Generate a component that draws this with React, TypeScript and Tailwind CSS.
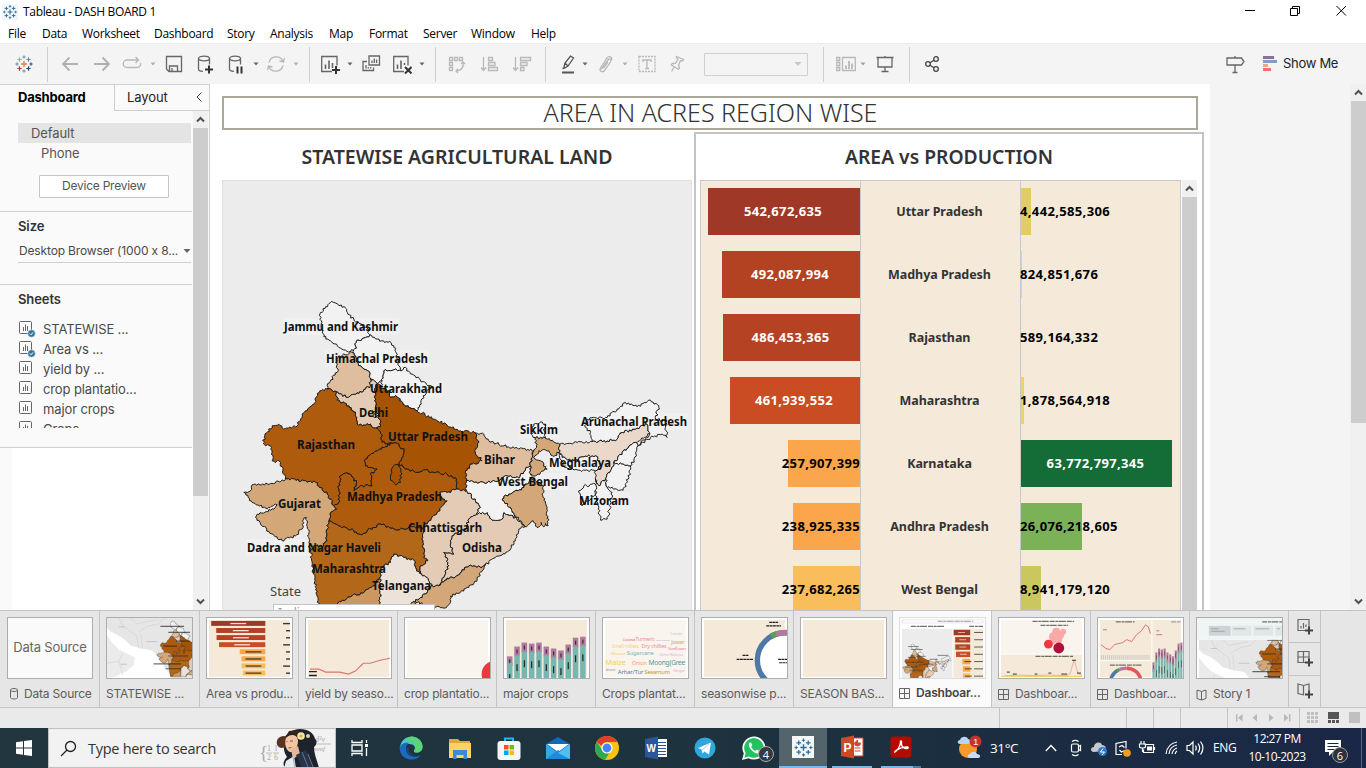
import React from "react";

type Pt = [number, number];

/* ---------- Map geometry ---------- */

function hash(n: number) {
  const s = Math.sin(n * 12.9898) * 43758.5453;
  return s - Math.floor(s);
}

// Adds a ragged border between two vertices; the same edge gives the same line in both directions.
function edge(a: Pt, b: Pt): Pt[] {
  const swap = a[0] > b[0] || (a[0] === b[0] && a[1] > b[1]);
  const p = swap ? b : a;
  const q = swap ? a : b;
  const len = Math.hypot(q[0] - p[0], q[1] - p[1]);
  const n = Math.max(1, Math.floor(len / 4.5));
  const seed = p[0] * 3.1 + p[1] * 7.7 + q[0] * 1.3 + q[1] * 2.9;
  const out: Pt[] = [];
  for (let i = 1; i < n; i++) {
    const t = i / n;
    const d = (hash(seed + i * 17.3) - 0.5) * 8;
    const nx = -(q[1] - p[1]) / len;
    const ny = (q[0] - p[0]) / len;
    out.push([p[0] + (q[0] - p[0]) * t + nx * d, p[1] + (q[1] - p[1]) * t + ny * d]);
  }
  return swap ? out.reverse() : out;
}

function rough(src: string, dx = 0, dy = 0) {
  const pts = src.split(" ").map((s) => {
    const [x, y] = s.split(",").map(Number);
    return [x + dx, y + dy] as Pt;
  });
  let d = `M${pts[0].join(" ")}`;
  pts.forEach((p, i) => {
    const q = pts[(i + 1) % pts.length];
    [...edge(p, q), q].forEach((m) => (d += `L${m[0].toFixed(1)} ${m[1].toFixed(1)}`));
  });
  return d + "Z";
}

const NONE = "#f2f2f2";
const west: [string, string][] = [
  [NONE, "310,35 322,40 345,52 352,70 370,85 385,97 412,115 418,132 405,140 378,150 375,165 378,172 360,182 345,178 325,170 318,160 295,148 280,138 272,110 268,70 285,48 303,32"],
  [NONE, "418,132 405,140 378,150 375,165 378,172 365,185 375,195 380,215 400,235 412,240 420,262 440,278 458,262 460,240 490,237 512,240 505,225 500,200 490,165 478,152 462,155 440,145"],
  ["#dfbe9f", "360,182 365,185 375,195 380,215 400,235 412,240 420,262 420,285 405,295 350,320 318,303 290,295 292,278 320,245 318,205 325,195 345,192"],
  ["#e3cbb5", "318,303 350,320 405,295 420,285 420,262 440,278 435,290 432,320 435,350 445,375 450,408 435,412 420,400 395,405 380,400 375,370 355,345 320,328"],
  ["#e3cbb5", "425,360 440,358 445,375 432,380"],
  [NONE, "458,262 460,240 490,237 512,240 520,230 545,250 570,268 605,290 578,315 572,340 560,360 535,350 508,330 500,318 480,320 475,300 450,290"],
  ["#a65304", "435,290 440,278 450,290 475,300 480,320 500,318 508,330 535,350 560,360 610,385 650,403 690,420 732,425 745,455 732,480 755,510 725,520 705,540 708,570 708,598 690,600 678,595 678,565 650,550 610,545 585,537 555,545 530,535 505,520 520,480 505,460 485,458 455,455 455,435 440,412 450,408 445,375 435,350 432,320"],
  ["#ae5b0d", "290,295 318,303 320,328 355,345 375,370 380,400 395,405 420,400 435,412 440,412 455,435 455,455 485,458 440,480 405,505 405,525 440,535 420,550 425,585 390,585 370,600 378,575 350,545 330,555 325,600 325,635 310,645 290,610 255,575 220,570 165,562 150,515 125,510 123,470 98,458 103,435 125,405 145,400 155,412 200,405 215,370 250,340 268,300"],
  ["#af5b0d", "310,645 325,635 325,600 330,555 350,545 378,575 370,600 390,585 425,585 420,550 440,535 405,525 405,505 440,480 485,458 505,460 520,480 505,520 530,535 555,545 585,537 610,545 650,550 678,565 678,595 650,605 628,605 635,625 650,630 620,665 595,690 580,710 545,708 500,718 450,700 410,720 395,732 350,712 325,705 295,690 300,665 318,655"],
  ["#a65304", "490,525 505,520 512,545 510,575 495,582 480,562 484,545"],
  ["#d3a778", "165,562 220,570 255,575 290,610 310,645 318,655 300,665 295,690 290,715 290,750 275,768 250,765 240,780 235,740 228,680 220,682 218,710 195,735 155,750 115,722 75,680 80,670 130,655 140,642 105,652 65,635 40,605 60,600 65,582 120,578 160,570"],
  ["#b36719", "240,780 250,765 275,768 290,750 290,715 295,690 325,705 350,712 395,732 410,720 450,700 500,718 545,708 580,710 578,750 580,800 592,810 570,825 568,848 555,830 550,808 520,800 490,790 480,815 450,830 450,858 430,885 400,905 365,915 320,940 310,975 268,975 262,920 250,850"],
  ["#cd9762", "320,940 365,915 400,905 430,885 450,858 448,975 310,975"],
  ["#ece2da", "450,858 450,830 480,815 490,790 520,800 550,808 555,830 568,848 590,860 605,885 575,920 540,940 530,975 448,975"],
  ["#e3cbb5", "628,605 650,605 678,595 690,600 708,598 735,630 750,650 738,670 715,685 705,715 665,735 660,760 670,790 640,785 655,825 640,860 625,885 605,885 590,860 568,848 570,825 592,810 580,800 578,750 580,710 595,690 620,665 650,630 635,625"],
  ["#e3cbb5", "738,670 770,665 785,688 815,685 820,665 855,680 885,705 865,715 855,750 835,780 795,800 765,822 740,830 715,825 690,845 670,862 650,862 625,885 640,860 655,825 640,785 670,790 660,760 665,735 705,715 715,685"],
  ["#d3a778", "765,822 740,865 715,890 660,916 660,935 640,952 612,950 560,935 530,975 540,940 575,920 605,885 625,885 650,862 670,862 690,845 715,825 740,830"],
  [NONE, "708,570 760,575 800,572 830,555 865,562 885,535 900,525 902,562 880,590 835,610 815,625 840,645 855,680 820,665 815,685 785,688 770,665 738,670 750,650 735,630 708,598"],
  ["#dfbe9f", "732,425 760,430 775,450 820,465 865,475 910,478 920,470 905,490 900,525 885,535 865,562 830,555 800,572 760,575 708,570 705,540 725,520 755,510 732,480 745,455"],
];
const east: [string, string][] = [
  ["#d3a778", "255,140 285,142 300,150 328,160 325,185 310,197 295,180 265,180 250,200 270,210 290,235 270,245 255,255 240,250 240,225 245,190 258,170"],
  ["#d3a778", "242,262 280,285 278,320 290,350 293,405 285,398 280,408 272,395 266,408 255,405 248,390 228,408 195,375 180,350 155,325 175,310 220,290"],
  [NONE, "255,140 248,140 245,120 250,100 270,93 285,100 280,120 285,142"],
  ["#ead9ca", "328,160 380,155 425,152 470,150 500,145 515,125 560,112 590,100 598,130 555,155 515,185 490,215 480,240 465,265 445,285 435,265 435,240 450,225 435,195 400,198 370,210 335,200 325,185"],
  [NONE, "325,185 335,200 370,210 400,198 435,195 450,225 435,240 385,238 340,228"],
  [NONE, "425,152 420,125 405,110 410,85 470,80 500,55 525,35 560,48 600,28 625,45 615,85 650,90 645,110 650,140 635,130 600,140 562,165 598,130 590,100 560,112 515,125 500,145 470,150"],
  [NONE, "490,215 515,185 555,155 562,165 558,195 540,225 500,218"],
  [NONE, "490,215 500,218 540,225 535,260 518,298 470,290 465,265 480,240"],
  [NONE, "435,265 445,285 465,265 470,290 485,305 480,340 470,385 450,388 445,350 435,310"],
  [NONE, "435,280 400,285 385,300 395,345 410,330 435,310"],
];
const STATES = [
  ...west.map(([fill, p]) => ({ fill, d: rough(p) })),
  ...east.map(([fill, p]) => ({ fill, d: rough(p, 660, 300) })),
];

function India({ stroke = 3 }: { stroke?: number }) {
  return (
    <g stroke="#1c1c1c" strokeWidth={stroke} strokeLinejoin="round">
      {STATES.map((s, i) => (
        <path key={i} d={s.d} fill={s.fill} />
      ))}
    </g>
  );
}

const LABELS: [string, number, number, number][] = [
  ["Jammu and Kashmir", 284, 331, 114],
  ["Himachal Pradesh", 326, 363, 102],
  ["Uttarakhand", 370, 393, 72],
  ["Delhi", 359, 417, 29],
  ["Rajasthan", 297, 449, 58],
  ["Uttar Pradesh", 388, 441, 80],
  ["Gujarat", 278, 508, 43],
  ["Madhya Pradesh", 347, 501, 95],
  ["Bihar", 484, 464, 31],
  ["Sikkim", 520, 434, 38],
  ["Arunachal Pradesh", 581, 426, 106],
  ["Meghalaya", 549, 467, 62],
  ["West Bengal", 497, 486, 71],
  ["Mizoram", 579, 505, 50],
  ["Chhattisgarh", 408, 532, 74],
  ["Odisha", 462, 552, 40],
  ["Dadra and Nagar Haveli", 247, 552, 134],
  ["Maharashtra", 312, 573, 74],
  ["Telangana", 372, 590, 59],
];

/* ---------- Small pieces ---------- */

function Icon({ className = "", color = "#666", w = 20, children }: { className?: string; color?: string; w?: number; children: React.ReactNode }) {
  return (
    <svg width={w} height="20" viewBox={`0 0 ${w} 20`} fill="none" stroke={color} strokeWidth="1.3" className={`block shrink-0 ${className}`}>
      {children}
    </svg>
  );
}

function Caret({ className = "", color = "#666", big = false }: { className?: string; color?: string; big?: boolean }) {
  return (
    <svg width="8" height="8" viewBox="0 0 8 8" className={`block shrink-0 ${className}`}>
      <path d={big ? "M.5 2h7L4 6z" : "M1.500 2.500h5L4 5.500z"} fill={color} />
    </svg>
  );
}

function Divider({ className = "" }: { className?: string }) {
  return <div className={`h-[35px] w-px shrink-0 bg-[#cfcfcf] ${className}`} />;
}

function Arrow({ down = false }: { down?: boolean }) {
  return (
    <div className="flex h-[17px] w-full shrink-0 items-center justify-center bg-[#f0f0f0]">
      <svg width="9" height="7" viewBox="0 0 9 7" fill="none" stroke="#505050" strokeWidth="2">
        <path d={down ? "M1 1.500l3.500 3.500L8 1.500" : "M1 5.500L4.500 2L8 5.500"} />
      </svg>
    </div>
  );
}

const plus = (x: number, y: number, c: string, s = 2, w = 1) => <path d={`M${x - s} ${y}h${s * 2}M${x} ${y - s}v${s * 2}`} stroke={c} strokeWidth={w} />;

function TableauMark({ mono = false }: { mono?: boolean }) {
  const c = mono ? ["#2a6ea0", "#2a6ea0", "#2a6ea0", "#2a6ea0", "#2a6ea0", "#2a6ea0"] : ["#eb7c34", "#ed9b3e", "#5c8ea5", "#c0313f", "#1f4778", "#7a86a8"];
  return (
    <>
      {plus(10, 10, c[0], 3, 1.4)}
      {plus(5.5, 5.5, c[1], 2.2, 1.2)}
      {plus(14.5, 5.5, c[2], 2.2, 1.2)}
      {plus(5.5, 14.5, c[3], 2.2, 1.2)}
      {plus(14.5, 14.5, c[4], 2.2, 1.2)}
      {plus(10, 3, c[5], 1.6)}
      {plus(10, 17, c[5], 1.6)}
      {plus(3, 10, c[2], 1.6)}
      {plus(17, 10, c[4], 1.6)}
    </>
  );
}

function SheetGlyph({ className = "", checked = false }: { className?: string; checked?: boolean }) {
  return (
    <svg width="17" height="17" viewBox="0 0 17 17" fill="none" stroke="#666" className={`block shrink-0 ${className}`}>
      <rect x=".5" y=".5" width="12" height="12" rx="1" />
      <path d="M4.500 6v4M6.500 3.500v6.500M8.500 5v5" />
      {checked && (
        <>
          <circle cx="12.500" cy="12.500" r="3.800" fill="#36789f" stroke="#fafafa" strokeWidth=".5" />
          <path d="M10.800 12.600l1.200 1.200 2-2.400" stroke="#fff" />
        </>
      )}
    </svg>
  );
}

/* ---------- Window chrome ---------- */

function TitleBar() {
  return (
    <header className="flex h-[23px] shrink-0 items-center bg-white">
      <svg width="16" height="16" viewBox="0 0 20 20" className="ml-[2px] mr-[5px] bg-[#f2f6f8]">
        <TableauMark mono />
      </svg>
      <span className="text-[12px] tracking-[-0.32px] text-black">Tableau - DASH BOARD 1</span>
      <svg width="130" height="20" viewBox="0 0 130 20" fill="none" stroke="#000" className="ml-auto">
        <path d="M9 8.500h10" />
        <path d="M54.500 6.500h7v7h-7zM56.500 6.500v-2h7v7h-2" />
        <path d="M100.500 4l9.500 9.500M110 4l-9.500 9.500" />
      </svg>
    </header>
  );
}

function MenuBar() {
  const item = "shrink-0";
  return (
    <nav className="flex h-[20px] shrink-0 items-center bg-white pl-2 pt-[2px] text-[12px] tracking-[-0.28px] text-black">
      <span className={`${item} w-[34px]`}>File</span>
      <span className={`${item} w-[40px]`}>Data</span>
      <span className={`${item} w-[72px]`}>Worksheet</span>
      <span className={`${item} w-[73px]`}>Dashboard</span>
      <span className={`${item} w-[43px]`}>Story</span>
      <span className={`${item} w-[59px]`}>Analysis</span>
      <span className={`${item} w-[40px]`}>Map</span>
      <span className={`${item} w-[54px]`}>Format</span>
      <span className={`${item} w-[48px]`}>Server</span>
      <span className={`${item} w-[60px]`}>Window</span>
      <span className={item}>Help</span>
    </nav>
  );
}

const OFF = "#b8b8b8";

function Toolbar() {
  return (
    <div className="flex h-[41px] shrink-0 items-center border-t border-[#ececec] bg-[#f4f4f4]">
      <Icon className="ml-[14px]"><TableauMark /></Icon>
      <Divider className="ml-[13px]" />
      <Icon className="ml-3" color="#b0b0b0"><path strokeWidth="1.8" d="M18 10H3M9.500 3.500L3 10l6.500 6.500" /></Icon>
      <Icon className="ml-3" color="#b0b0b0"><path strokeWidth="1.8" d="M2 10h15M10.500 3.500L17 10l-6.500 6.500" /></Icon>
      <Icon className="ml-[10px]" color={OFF}><path d="M10 6H5a3.500 3.500 0 000 7.500h10a3.500 3.500 0 003.500-4.500M8 6h8M13.500 3l3 3-3 3" /></Icon>
      <Caret className="ml-[7px]" color="#b0b0b0" />
      <Icon className="ml-[7px]"><path d="M2.500 2.500h15v15H5l-2.500-2.500zM5.500 17v-5h8v5M8 17v-3" /></Icon>
      <Icon className="ml-3">
        <ellipse cx="8" cy="4.500" rx="5.500" ry="2.300" /><path d="M2.500 4.500V15c0 1.400 2 2.300 4.500 2.300M13.500 4.500v6" />
        <path stroke="#333" strokeWidth="2" d="M9 15.500h8M13 11.500v8" />
      </Icon>
      <Icon className="ml-[11px]">
        <ellipse cx="8" cy="4.500" rx="5.500" ry="2.300" /><path d="M2.500 4.500V15c0 1.400 2 2.300 4.500 2.300M13.500 4.500v6" />
        <path stroke="#333" strokeWidth="2" d="M10.500 12.500v7M14.500 12.500v7" />
      </Icon>
      <Caret className="ml-[5px]" />
      <Icon className="ml-[6px]" color={OFF}><path d="M3 8.500a7.500 7.500 0 0114-1.500M17 11.500A7.500 7.500 0 013 13M18.500 4l-1 4-4-1M1.500 16l1-4 4 1" /></Icon>
      <Caret className="ml-[6px]" color="#b0b0b0" />
      <Divider className="ml-[9px]" />
      <Icon className="ml-[10px]">
        <path d="M12 17.500H1.700V2.500H17v9" /><path strokeWidth="1.600" d="M5.500 10.500V15M9 6.500V15M12.500 9v5" /><path stroke="#333" strokeWidth="2" d="M12 16h8M16 12v8" />
      </Icon>
      <Caret className="ml-[6px]" />
      <Icon className="ml-[7px]">
        <path d="M8 2h10.500v9H8zM6 7.500H2v9h10.500v-3M11 6.500V9M13.300 4.500V9M15.600 5.500V9M5 11v3.500M7.300 13v1.500M9.600 13v1.500" />
      </Icon>
      <Icon className="ml-[11px]">
        <path d="M12 17.500H1.700V2.500H16v9" /><path strokeWidth="1.600" d="M5.500 10.500V15M9 6.500V15M12.500 9v2" /><path stroke="#333" strokeWidth="2" d="M13 13l6.500 6.500M19.500 13L13 19.500" />
      </Icon>
      <Caret className="ml-[6px]" />
      <Divider className="ml-[9px]" />
      <Icon className="ml-[11px]" color={OFF}><path d="M2.500 3.500h3v3h-3zM7.500 3.500h3v3h-3zM12.500 3.500h3v3h-3zM2.500 8.500h3v3h-3zM2.500 13.500h3v3h-3zM16 8.500c1 4-1 8-7 8.500M14 10l2-2 2 2M11 15l-2 2 2 2" /></Icon>
      <Icon className="ml-3" color={OFF}><path d="M4.500 3v13M2 13.500l2.500 3 2.500-3M9.500 3.500h4v3h-4zM9.500 8.500h6.500v3H9.500zM9.500 13.500h9v3h-9z" /></Icon>
      <Icon className="ml-[13px]" color={OFF}><path d="M3.500 3v13M1 13.500l2.500 3 2.500-3M8.500 3.500h10v3h-10zM8.500 8.500H15v3H8.500zM8.500 13.500H12v3H8.500z" /></Icon>
      <Divider className="ml-[13px]" />
      <Icon className="ml-3" color="#555"><path d="M6 13l1-4 5.500-7 3 2L10 12l-3.500 2zM7 9l3 3M4.500 14.500l2-.5" /><path strokeWidth="2" d="M4 18.500h12" /></Icon>
      <Caret className="ml-[3px]" />
      <Icon className="ml-[6px]" color={OFF}><path d="M6.500 15L13 6c1.500-2 4-.5 2.500 2l-6 8.500c-2 2.500-5.500.5-4-2.500L12 4c2-2.500 5.500-1 4.500 2M8.500 14l4.500-6" /></Icon>
      <Caret className="ml-[6px]" color="#b0b0b0" />
      <Icon className="ml-2" color={OFF}><path strokeDasharray="2 1" d="M2 2.500h16v15H2z" /><path d="M6 8V6h8v2M10 6v8.500M8 14.500h4" /></Icon>
      <Icon className="ml-[10px]" color={OFF}><path d="M9.500 2.500l7 3-1 1.500-2-.3-2 4.300 1 3-1.200 1.200-7-4.200 1-1.500 3-.2 2.700-4-1.500-1.500zM7.500 12.500l-3 5" /></Icon>
      <div className="ml-[17px] flex h-[23px] w-[104px] shrink-0 items-center justify-end rounded-[1px] border border-[#d0d0d0] pr-[5px]">
        <Caret color="#c8c8c8" big />
      </div>
      <Divider className="ml-[15px]" />
      <Icon className="ml-3" color={OFF}><path d="M.7 3.500h3v3h-3zM.7 8.500h3v3h-3zM.7 13.500h3v3h-3zM6.500 3.500h12.800v13H6.500z" /><path strokeWidth="1.800" d="M10 11.500V15M13 7v8M16 9.500V15" /></Icon>
      <Caret className="ml-[3px]" color="#a0a0a0" />
      <Icon className="ml-2"><path d="M1.500 3.500h17M3 3.500V13h14V3.500M10 13v4.500M6.500 17.500h7M10 2v2" /></Icon>
      <Divider className="ml-[14px]" />
      <Icon className="ml-3" color="#444"><circle cx="6" cy="10" r="2.300" /><circle cx="14" cy="5" r="2.300" /><circle cx="14" cy="15" r="2.300" /><path d="M8 8.800l4-2.500M8 11.200l4 2.500" /></Icon>
      <Icon className="ml-[283px]"><path d="M2 4h14.500L19 7.500 16.500 11H2zM10 2v2M10 11v7.500M7.500 18.500h5" /></Icon>
      <svg width="16" height="16" viewBox="0 0 16 16" className="ml-[17px]">
        <path d="M1 0h11v3H1z" fill="#8a7098" /><path d="M1 4h14v3H1z" fill="#7c9fc9" /><path d="M1 8h5v3H1z" fill="#f4a582" /><path d="M1 12h8v3H1z" fill="#fb6c7c" />
      </svg>
      <span className="ml-[5px] font-['Inter','Liberation_Sans',sans-serif] text-[13px] tracking-[-0.3px] text-[#222]">Show Me</span>
    </div>
  );
}

/* ---------- Left pane ---------- */

const SHEETS: [string, boolean][] = [
  ["STATEWISE ...", true],
  ["Area vs ...", true],
  ["yield by ...", false],
  ["crop plantatio...", false],
  ["major crops", false],
  ["Crops", false],
];

function SidePane() {
  return (
    <aside className="flex w-[210px] shrink-0 flex-col border-r border-t border-[#cfcfcf] bg-[#fafafa] font-['Inter','Liberation_Sans',sans-serif] text-[13px] text-[#4a4a4a]">
      <div className="flex h-[26px] shrink-0">
        <div className="w-[114px] pl-[18px] pt-[3px] font-bold tracking-[-0.2px] text-black">Dashboard</div>
        <div className="flex flex-1 items-start border-b border-l border-[#cfcfcf] pl-3 pt-[3px] tracking-[-0.1px] text-[#222]">
          Layout
          <svg width="8" height="12" viewBox="0 0 8 12" fill="none" stroke="#444" className="ml-auto mr-[6px] mt-[3px]"><path d="M6.500 1.500L2 6l4.500 4.500" /></svg>
        </div>
      </div>
      <div className="flex min-h-0 flex-1">
        <div className="flex w-[193px] flex-col">
          <div className="flex h-[101px] w-[192px] shrink-0 flex-col border-b border-[#cfcfcf] pr-px pt-3 tracking-[-0.1px] text-[#555]">
            <div className="ml-[18px] h-5 bg-[#e4e4e4] pl-[13px] leading-5">Default</div>
            <div className="ml-[18px] h-5 pl-[23px] leading-5">Phone</div>
            <div className="ml-[39px] mt-[12px] h-[23px] w-[130px] rounded-[1px] border border-[#c4c4c4] bg-white text-center text-[12px] leading-[20px] tracking-[-0.25px]">Device Preview</div>
          </div>
          <div className="h-[73px] w-[192px] shrink-0 border-b border-[#cfcfcf] pl-[18px] pr-px pt-[4px]">
            <div className="font-semibold leading-5 tracking-[-0.1px] text-[#333]">Size</div>
            <div className="mt-[3px] flex h-[24px] items-center justify-between border-b border-[#cfcfcf] pl-px pt-px">
              <span className="whitespace-nowrap text-[12px] tracking-[-0.15px]">Desktop Browser (1000 x 8...</span>
              <Caret big />
            </div>
          </div>
          <div className="h-[163px] w-[192px] shrink-0 border-b border-[#cfcfcf] pl-[18px] pt-[4px]">
            <div className="font-semibold leading-5 tracking-[-0.1px] text-[#333]">Sheets</div>
            <div className="mt-[10px] h-[109px] overflow-hidden">
              {SHEETS.map(([name, on]) => (
                <div key={name} className="flex h-5 items-center pl-[1px]">
                  <SheetGlyph checked={on} />
                  <span className="ml-[7px] leading-5 tracking-[-0.12px]">{name}</span>
                </div>
              ))}
            </div>
          </div>
          <div className="ml-3 flex-1 bg-white" />
        </div>
        <div className="flex w-[15px] flex-col bg-[#f0f0f0]">
          <Arrow />
          <div className="h-[368px] bg-[#cdcdcd]" />
          <div className="mt-auto"><Arrow down /></div>
        </div>
      </div>
    </aside>
  );
}

/* ---------- Dashboard ---------- */

type Row = { state: string; area: string; areaW: number; areaC: string; prod: string; prodW: number; prodC: string };
const ROWS: Row[] = [
  { state: "Uttar Pradesh", area: "542,672,635", areaW: 152, areaC: "#9f3826", prod: "4,442,585,306", prodW: 10, prodC: "#e1cd64" },
  { state: "Madhya Pradesh", area: "492,087,994", areaW: 138, areaC: "#b34223", prod: "824,851,676", prodW: 1, prodC: "#f6cf71" },
  { state: "Rajasthan", area: "486,453,365", areaW: 137, areaC: "#b44223", prod: "589,164,332", prodW: 0, prodC: "#f6cf71" },
  { state: "Maharashtra", area: "461,939,552", areaW: 130, areaC: "#ca4c22", prod: "1,878,564,918", prodW: 3, prodC: "#f0d264" },
  { state: "Karnataka", area: "257,907,399", areaW: 72, areaC: "#fba64a", prod: "63,772,797,345", prodW: 151, prodC: "#146c36" },
  { state: "Andhra Pradesh", area: "238,925,335", areaW: 67, areaC: "#fba64a", prod: "26,076,218,605", prodW: 61, prodC: "#7bb257" },
  { state: "West Bengal", area: "237,682,265", areaW: 67, areaC: "#fabd5c", prod: "8,941,179,120", prodW: 20, prodC: "#cac75e" },
];

function BarTable() {
  const bar = "flex h-[47px] items-center whitespace-nowrap text-[13px] tracking-[0.35px]";
  return (
    <div className="flex w-[481px] flex-col overflow-hidden border border-b-0 border-[#c9c9c9] bg-[#f5ead9] text-[12.5px] font-bold">
      {ROWS.map((r) => (
        <div key={r.state} className="flex h-[63px] shrink-0">
          <div className="flex w-[160px] justify-end border-r border-[#c9c9c9] pt-[7px]">
            <div className={`${bar} ${r.areaW > 100 ? "justify-center pr-[2px] text-white" : "justify-end text-black"}`} style={{ width: r.areaW, background: r.areaC }}>
              <span className="shrink-0">{r.area}</span>
            </div>
          </div>
          <div className="flex w-[160px] items-center justify-center border-r border-[#c9c9c9] pr-[2px] tracking-[-0.05px] text-[#333]">{r.state}</div>
          <div className="flex flex-1 pt-[7px]">
            <div className={`${bar} ${r.prodW > 100 ? "justify-center pr-[2px] text-white" : "justify-start text-black"}`} style={{ width: r.prodW, background: r.prodC }}>
              <span className={r.prodW > 100 ? "shrink-0" : "-ml-px shrink-0"}>{r.prod}</span>
            </div>
          </div>
        </div>
      ))}
    </div>
  );
}

function Canvas() {
  return (
    <main className="flex w-[1000px] shrink-0 flex-col bg-white pl-3 pt-3 font-['Noto_Sans','Open_Sans',sans-serif]">
      <h1 className="flex h-[34px] w-[976px] shrink-0 items-center justify-center border-2 border-[#aca899] pl-px text-[25px] font-light text-[#333]">AREA IN ACRES REGION WISE</h1>
      <div className="flex min-h-0 flex-1">
        <section className="flex w-[470px] flex-col">
          <h2 className="flex h-[50px] shrink-0 items-center justify-center pt-[3px] text-[19.5px] font-semibold text-[#333]">STATEWISE AGRICULTURAL LAND</h2>
          <div className="relative flex-1 overflow-hidden border border-b-0 border-[#e0e0e0] bg-[#ececec]">
            <svg width="469" height="429" viewBox="223 181 469 429" className="block">
              {LABELS.map(([t, x, y, w]) => (
                <rect key={t} x={x - 1} y={y - 13} width={w + 2} height="17" fill="#f0f0f0" />
              ))}
              <g transform="translate(230.500 290.800) scale(.33333)"><India /></g>
              <g fontSize="12" fontWeight="700" fill="#111" transform="translate(0 .4)">
                {LABELS.map(([t, x, y, w]) => (
                  <text key={t} x={x} y={y} textLength={w} lengthAdjust="spacingAndGlyphs">{t}</text>
                ))}
              </g>
            </svg>
            <div className="absolute left-[47px] top-[402px] text-[13px] leading-4 text-[#444]">State</div>
            <div className="absolute left-[50px] top-[423px] h-5 w-[162px] border border-[#c4c4c4] bg-white pl-1 text-[12px] leading-4 text-[#999]">India</div>
          </div>
        </section>
        <section className="ml-[2px] mt-[2px] flex w-[510px] flex-col border-2 border-b-0 border-[#c4c4c4]">
          <h2 className="flex h-[46px] shrink-0 items-center justify-center text-[19.3px] font-semibold text-[#333]">AREA vs PRODUCTION</h2>
          <div className="flex min-h-0 flex-1 pl-[4px]">
            <BarTable />
            <div className="ml-px flex w-[15px] flex-col bg-[#f0f0f0]">
              <Arrow />
              <div className="flex-1 bg-[#cdcdcd]" />
            </div>
          </div>
        </section>
      </div>
    </main>
  );
}

/* ---------- Sheet tabs ---------- */

const CREAM = "#f5ead9";

function MapThumb({ x = 48, y = 1, s = 0.06, ox = 0, oy = 0 }: { x?: number; y?: number; s?: number; ox?: number; oy?: number }) {
  return (
    <g>
      <g transform={`translate(${ox} ${oy})`}>
        <path d="M0 0H86V62H0z" fill="#fff" />
        <path d="M0 0H86V62H66L56 46 50 38 46 33 34 31 24 28 18 22 12 18 4 14 0 10z" fill="#e6e6e6" />
        <path d="M0 18L6 26 12 32 20 36 28 40 27 48 20 54 10 59 0 62z" fill="#ebebeb" />
        <path d="M12 0l4 8 14 10 2 12M32 14l10-6 10-2 6-6M34 16l2 14M0 46l12-2 4-8M12 44l4 14M24 0l6 6 20-4" fill="none" stroke="#cfcfcf" strokeWidth=".6" />
        <path d="M12 9h6M40 24h11M14 47h6" stroke="#bdbdbd" strokeWidth=".8" />
      </g>
      <g transform={`translate(${x} ${y}) scale(${s})`}><India stroke={4.5} /></g>
      <g fill="#222" transform={`translate(${x} ${y})`}>
        <path d="M6 7h24v1.200H6zM14 13h22v1.200H14zM9 27h14v1.200H9zM-1 45h28v1.200H-1zM14 37h20v1.200H14zM11 50h16v1.200H11zM22 22h14v1.200H22z" opacity=".65" />
      </g>
    </g>
  );
}

function AreaThumb() {
  return (
    <g>
      <path d="M2 2H84V60H2z" fill={CREAM} />
      {ROWS.concat({ ...ROWS[6], area: "222,404,359", areaW: 63 }).map((r, i) => (
        <g key={i}>
          <rect x={59 - r.areaW * 0.36} y={3 + i * 7.2} width={r.areaW * 0.36} height="5" fill={r.areaC} />
          <rect x={i < 4 ? 59 - r.areaW * 0.18 - 8 : 39} y={5 + i * 7.2} width="16" height="1.300" fill={i < 4 ? "#fff" : "#222"} opacity=".85" />
          <rect x={i % 3 ? 80 : 77} y={5 + i * 7.2} width={i % 3 ? 4 : 7} height="1.400" fill="#333" />
        </g>
      ))}
    </g>
  );
}

function CropBars({ x = 0, y = 0, k = 1 }: { x?: number; y?: number; k?: number }) {
  const tops = [39, 29, 25, 26, 25, 29, 31, 33, 27, 20, 19];
  return (
    <g transform={`translate(${x} ${y}) scale(${k} 1)`}>
      {tops.map((t, i) => (
        <g key={i}>
          <rect x={3 + i * 7.4} y={t} width="5.600" height="10" fill="#b07aa1" />
          <rect x={3 + i * 7.4} y={t + (i ? 9 : 6)} width="5.600" height="50" fill="#76b7b2" />
          <rect x={5.2 + i * 7.4} y={t + 18} width="1.200" height="7" fill="#222" />
          <rect x={5.2 + i * 7.4} y={t + 3} width="1.200" height="4" fill="#333" />
        </g>
      ))}
    </g>
  );
}

const WORDS: [string, number, number, number, string][] = [
  ["Coconut", 20, 23, 3.5, "#e15759"], ["Turmeric", 33, 23, 5, "#f08a8c"], ["Black pepper", 54, 23, 2.5, "#c9a7c4"], ["Coriander", 68, 17, 3, "#c9c9c9"],
  ["Small millets", 9, 30, 5, "#f3d279"], ["Dry chillies", 39, 30, 5.4, "#f08a9c"], ["Jowar", 69, 26, 5.4, "#bfae5a"],
  ["Sunflower", 66, 33, 4.2, "#f07a7c"], ["Masoor", 8, 38, 4.4, "#f1ce63"], ["Sugarcane", 24, 38, 5.8, "#76b7b2"], ["Other Rabi pu", 57, 39, 4, "#d7b5cf"],
  ["Maize", 2, 48, 8, "#f1d06a"], ["Onion", 29, 48, 5.6, "#f7a35c"], ["Moong(Gree", 46, 48, 6.6, "#499894"],
  ["Arhar/Tur", 15, 57, 6, "#4e79a7"], ["Sesamum", 42, 57, 5.8, "#b6992d"], ["Ginger", 71, 55, 4, "#e9a9c4"], ["Arecanut", 3, 54, 2.6, "#999"],
];

function TinyTitle({ x, y, w, c = "#444" }: { x: number; y: number; w: number; c?: string }) {
  return <path d={`M${x} ${y}h${w}`} stroke={c} strokeWidth="1.300" strokeDasharray="5 .8 3 .5 7 1" opacity=".75" />;
}

function Thumb({ kind }: { kind: string }) {
  switch (kind) {
    case "map":
      return <MapThumb />;
    case "area":
      return <AreaThumb />;
    case "yield":
      return (
        <g>
          <path d="M2 2H84V60H2z" fill={CREAM} />
          <path d="M4 52h9l7 3h14l9 2 7-3 8-8h7l10-3 10-2" fill="none" stroke="#e0736f" strokeWidth="1.100" />
          <path d="M3 54.500h8M3 58.500h8" stroke="#222" strokeWidth="1.400" />
        </g>
      );
    case "plant":
      return <g><path d="M2 2H84V60H2z" fill="#faf4ef" /><circle cx="91" cy="57" r="13.500" fill="#ea3a40" /></g>;
    case "major":
      return <g><path d="M2 2H84V60H2z" fill={CREAM} /><CropBars /></g>;
    case "words":
      return (
        <g fontFamily="Noto Sans, sans-serif">
          <path d="M2 2H84V60H2z" fill="#faf4ef" />
          {WORDS.map(([t, x, y, s, c]) => <text key={t} x={x} y={y} fontSize={s} fill={c}>{t}</text>)}
        </g>
      );
    case "season":
      return (
        <g>
          <path d="M2 2H84V60H2z" fill={CREAM} />
          <circle cx="84" cy="43" r="28" fill="#fff" stroke="#4e79a7" strokeWidth="5.500" />
          <path d="M70 18.500a28 28 0 016-2.500" stroke="#59a14f" strokeWidth="6" fill="none" />
          <path d="M75 16.300a28 28 0 0112-1.300" stroke="#b07aa1" strokeWidth="6" fill="none" />
          <path d="M68 4.500h9M65 8h15M41 38h6M35 42h17M77 42h9M78 45.500h8" stroke="#222" strokeWidth="1.200" strokeDasharray="3 .4" />
        </g>
      );
    case "base":
      return <path d="M2 2H84V60H2z" fill={CREAM} />;
    case "dash1":
      return (
        <g>
          <path d="M2 2H84V60H2z" fill="#fff" />
          <path d="M2 2h82v3H2z" fill="none" stroke="#ccc" strokeWidth=".5" />
          <TinyTitle x={38} y={3.5} w={36} c="#999" />
          <TinyTitle x={11} y={8.5} w={34} />
          <TinyTitle x={70} y={8.5} w={14} />
          <path d="M2 11h51v50H2z" fill="#ececec" />
          <path d="M54 11h30v50H54z" fill={CREAM} />
          <g transform="translate(1 25) scale(.0385 .042)"><India stroke={5} /></g>
          <path d="M8 29h11M11 32h12M8 40h8M16 39h10M5 45h9M12 45h12M5 50h14M10 53h12M30 42h8M38 38h11M24 47h10" stroke="#333" opacity=".7" strokeWidth=".8" />
          {ROWS.map((r, i) => (
            <g key={i}>
              <rect x={71 - r.areaW * 0.11} y={12 + i * 7.4} width={r.areaW * 0.11} height="5.500" fill={r.areaC} />
              <path d={`M${71 - r.areaW * 0.08} ${14.7 + i * 7.4}h7`} stroke={i < 4 ? "#f3d9cf" : "#222"} strokeWidth=".8" />
              <path d={`M75 ${14.7 + i * 7.4}h9`} stroke="#333" strokeWidth=".8" />
            </g>
          ))}
        </g>
      );
    case "dash2":
      return (
        <g>
          <path d="M2 2H84V36H2z" fill="#faf4ef" />
          <path d="M2 37H84V60H2z" fill={CREAM} />
          <TinyTitle x={34} y={3.5} w={42} /><TinyTitle x={42} y={7.5} w={28} /><TinyTitle x={37} y={39} w={38} />
          <g fill="#f9aaa4"><circle cx="58" cy="14" r="4" /><circle cx="62" cy="17" r="4" /><circle cx="55" cy="19" r="4.500" /><circle cx="60" cy="22" r="4" /><circle cx="65" cy="14" r="3" /><circle cx="54" cy="24" r="3" /></g>
          <circle cx="50" cy="26.500" r="4.500" fill="#ea3a40" /><circle cx="60.500" cy="30.500" r="5.500" fill="#b2103c" />
          <path d="M5 59l14-1 16 .5 14-.5 20 .5 3-2 4-14 4 14 4 2" fill="none" stroke="#e9a9a0" strokeWidth=".9" />
          <path d="M2 59.500h82" stroke="#f1ce63" /><path d="M8 55h3M14 57h4M36 57h3M50 56h3M63 57h6M74 43h4M79 56h4" stroke="#333" />
        </g>
      );
    case "dash3":
      return (
        <g>
          <path d="M2 2H54V43H2zM55 2H84V60H55zM2 44H54V60H2z" fill={CREAM} />
          <TinyTitle x={18} y={4} w={19} /><TinyTitle x={74} y={4} w={10} c="#888" /><TinyTitle x={12} y={48} w={32} />
          <path d="M3 27l5 4 4 1 5-5 8-2 4-3 5 2 5-7 5-4 4-6 3 2 2 7" fill="none" stroke="#e0736f" />
          <path d="M3 40h49" stroke="#aaa" strokeWidth="5" strokeDasharray="1 1" opacity=".5" />
          <CropBars x={54} y={6} k={0.38} />
          <g fill="none" strokeWidth="3.500"><path d="M13 62a15 15 0 017-9" stroke="#4e79a7" /><path d="M19 54l3-2" stroke="#59a14f" /><path d="M22 52l7-1" stroke="#b07aa1" /><path d="M29 51c7 0 13 5 14 11" stroke="#e15759" /></g>
          <path d="M59 13h3M59 17h6M5 12h4" stroke="#b07aa1" />
        </g>
      );
    default:
      return (
        <g>
          <MapThumb x={57} y={9} oy={22} ox={2} />
          <path d="M0 0H86V22H0z" fill="#eff5f5" />
          <TinyTitle x={66} y={4} w={20} />
          <path d="M12 8h22v10H12z" fill="#ccd5d5" /><path d="M35 8h20v10H35zM57 8h20v10H57zM79 8h7v10h-7z" fill="#dfe7e7" />
          <path d="M14 11h8M14 13.500h14M37 11h12M59 11h14M81 11h3" stroke="#999" strokeWidth=".8" />
        </g>
      );
  }
}

const TABS: { label: string; kind: string; icon?: "dash" | "story" }[] = [
  { label: "STATEWISE ...", kind: "map" },
  { label: "Area vs produ...", kind: "area" },
  { label: "yield by seaso...", kind: "yield" },
  { label: "crop plantatio...", kind: "plant" },
  { label: "major crops", kind: "major" },
  { label: "Crops plantat...", kind: "words" },
  { label: "seasonwise p...", kind: "season" },
  { label: "SEASON BAS...", kind: "base" },
  { label: "Dashboar...", kind: "dash1", icon: "dash" },
  { label: "Dashboar...", kind: "dash2", icon: "dash" },
  { label: "Dashboar...", kind: "dash3", icon: "dash" },
  { label: "Story 1", kind: "story", icon: "story" },
];

function Book() {
  return <path d="M1 2l4.500 1.500L10 2v8.500L5.500 12 1 10.500zM5.500 3.500V12" />;
}

function TabStrip() {
  return (
    <div className="flex h-[98px] shrink-0 border-y border-[#c4c4c4] bg-[#e6e6e6] font-['Inter','Liberation_Sans',sans-serif] text-[12px] tracking-[-0.18px] text-[#5c5c5c]">
      <div className="flex w-[100px] shrink-0 flex-col border-r border-[#c4c4c4] pl-[7px] pt-[6px]">
        <div className="flex h-[62px] w-[86px] items-center justify-center border border-[#adadad] bg-[#fafafa] text-[13px] text-[#666]">Data Source</div>
        <div className="mt-[7px] flex items-center text-[12px] leading-4">
          <svg width="10" height="14" viewBox="0 0 10 14" fill="none" stroke="#666" className="ml-[2px] mr-[5px]"><path d="M1.500 3v7.500c0 2 7 2 7 0V3c0-2-7-2-7 0c0 2 7 2 7 0" /></svg>
          <span className="whitespace-nowrap">Data Source</span>
        </div>
      </div>
      {TABS.map((t, i) => {
        const on = t.kind === "dash1";
        return (
          <div key={i} className={`flex shrink-0 flex-col border-r border-[#c4c4c4] pl-[6px] pt-[6px] ${i === 0 ? "w-[100px]" : "w-[99px]"} ${on ? "bg-[#fafafa]" : ""}`}>
            <div className={`h-[62px] w-[87px] overflow-hidden border bg-white ${on ? "border-[#dedede]" : "border-[#adadad]"}`}>
              <svg width="85" height="60" viewBox="0 0 86 61" preserveAspectRatio="none" className="block"><Thumb kind={t.kind} /></svg>
            </div>
            <div className={`flex items-center whitespace-nowrap leading-4 ${on ? "mt-[6px] font-semibold tracking-[-0.2px] text-[#444]" : "mt-[7px]"}`}>
              {t.icon && (
                <svg width="12" height="13" viewBox="0 0 12 13" fill="none" stroke="#666" className="mr-[5px]">
                  {t.icon === "dash" ? <path d="M.5 1.500h10v10H.5zM5.500 1.500v10M.5 6.500h10" /> : <Book />}
                </svg>
              )}
              {t.label}
            </div>
          </div>
        );
      })}
      <div className="flex w-[32px] flex-col border-r border-[#c4c4c4]">
        {["sheet", "dash", "story"].map((k, i) => (
          <div key={k} className={`flex flex-1 items-center justify-center ${i < 2 ? "border-b border-[#c4c4c4]" : ""}`}>
            <svg width="18" height="18" viewBox="0 0 18 18" fill="none" stroke="#666" strokeWidth="1.200">
              {k === "sheet" && <path d="M9 12.500H2v-11h11V9M5 8v2.500M7.500 5v5.500M10 6.500V9" />}
              {k === "dash" && <path d="M9 12.500H2v-11h11V9M7.500 1.500v11M2 7h11" />}
              {k === "story" && <path d="M8 13l-6-1.500V2l5.500 1.500L13 2v7M7.500 3.500V13" />}
              <path d="M9 12.500h8M13 8.500v8" stroke="#444" strokeWidth="2" />
            </svg>
          </div>
        ))}
      </div>
    </div>
  );
}

function StatusBar() {
  return (
    <div className="flex h-[20px] shrink-0 bg-[#eaeaea]">
      <div className="w-[1000px] border-r border-[#c4c4c4]" />
      <div className="w-[127px] border-r border-[#c4c4c4]" />
      <div className="w-[27px] border-r border-[#c4c4c4]" />
      <div className="w-[27px] border-r border-[#c4c4c4]" />
      <div className="w-[47px] border-r border-[#c4c4c4]" />
      <div className="w-[72px] border-r border-[#c4c4c4]">
        <svg width="71" height="20" viewBox="0 0 71 20" fill="#b8b8b8" className="block">
          <path d="M8 6h1.400v7.500H8zM14.500 6v7.500L10 9.800zM29 6v7.500L24.500 9.800zM41 6v7.500l4.500-3.700zM56 6v7.500l4.500-3.700zM61 6h1.400v7.500H61z" />
        </svg>
      </div>
      <svg width="66" height="20" viewBox="0 0 66 20" fill="#c0c0c0" className="block">
        <path d="M7 4h3v3H7zM11 4h3v3h-3zM15 4h3v3h-3zM7 8h3v3H7zM11 8h3v3h-3zM15 8h3v3h-3zM7 12h3v3H7zM11 12h3v3h-3zM15 12h3v3h-3z" />
        <path d="M28 4h11v7H28zM28 12h3v3h-3zM32 12h3v3h-3zM36 12h3v3h-3z" fill="#555" />
        <path d="M49 4h11v11H49z" />
      </svg>
    </div>
  );
}

/* ---------- Taskbar ---------- */

function AppIcon({ className = "", children }: { className?: string; children: React.ReactNode }) {
  return <svg width="24" height="24" viewBox="0 0 24 24" className={`block shrink-0 ${className}`}>{children}</svg>;
}

function Taskbar() {
  return (
    <footer className="flex h-10 shrink-0 items-center bg-linear-to-r from-[#21363f] via-[#1d333d] to-[#1a2746] text-white">
      <svg width="16" height="16" viewBox="0 0 16 16" fill="#fff" className="ml-4"><path d="M0 2.300l7-1v6.200H0zM8 1.100L16 0v7.500H8zM0 8.500h7v6.200l-7-1zM8 8.500h8V16l-8-1.100z" /></svg>
      <div className="ml-4 flex h-10 w-[288px] shrink-0 items-center overflow-hidden border border-[#c0c0c0] bg-[#f2f2f2] text-[#333]">
        <svg width="17" height="17" viewBox="0 0 17 17" fill="none" stroke="#222" strokeWidth="1.300" className="ml-[11px]"><circle cx="10.500" cy="6.500" r="5" /><path d="M7 10L1 16" /></svg>
        <span className="ml-[11px] whitespace-nowrap pt-px text-[14.5px] tracking-[-0.28px]">Type here to search</span>
        <svg width="76" height="40" viewBox="0 0 76 40" className="ml-auto">
          <g fontFamily="Liberation Serif, serif" fill="#aaa">
            <text x="0" y="31" fontSize="19">{"{"}</text><text x="8" y="23" fontSize="8">1</text><text x="8" y="32" fontSize="8">2</text><text x="15" y="23" fontSize="8">1</text><text x="15" y="32" fontSize="8">6</text>
            <text x="56" y="14" fontSize="8" fontStyle="italic">d²v</text><text x="54" y="23" fontSize="7" fontStyle="italic">mmf</text>
          </g>
          <path d="M7 25h6M14 25h6M55 16h17" stroke="#aaa" strokeWidth=".7" />
          <path d="M25 12c1-6 8-11 16-11 8 0 14 4 15 10 3 2 1 7-1 8 0 7 3 13 5 21H26c-3-4-1-8 2-11-3-4-4-10-3-17z" fill="#1e222a" />
          <path d="M22 20c-5-1-6-8-1-11 4-2 7-1 8 2l-2 8z" fill="#59331f" />
          <path d="M27 10c4-5 12-4 12 3 0 6-4 12-8 11-4-1-6-9-4-14z" fill="#f0c5a4" />
          <path d="M32 22l7-4 2 8-7 5z" fill="#e5b896" />
          <path d="M26 10c3-6 11-6 13 0l3-3-3-5-9 1z" fill="#3a2318" />
          <path d="M31 13h3M28.500 13.500h-1M29.500 20l3-.5" stroke="#9c3d32" strokeWidth=".9" />
          <circle cx="42" cy="8" r="3.800" fill="#f4e6b4" /><circle cx="42" cy="8" r="1.500" fill="#d9a630" /><circle cx="49" cy="8" r="2" fill="#e3d2a0" />
          <path d="M27 33l8-5 2 12H25z" fill="#e8ecf0" /><path d="M37 27l6 13h12l-8-18z" fill="#28334c" /><path d="M34 29l2 11M43 24l6 15M49 26l5 13" stroke="#8294ae" strokeWidth=".7" />
        </svg>
      </div>
      <svg width="18" height="16" viewBox="0 0 18 16" fill="none" stroke="#fff" strokeWidth="1.300" className="ml-[15px]"><path d="M1 0v2.500h10V0M1 5h10v6H1zM1 16v-2.500h10V16M15.500 0v3M15.500 8v8" /><path d="M14 4h3v3h-3z" fill="#fff" stroke="none" /></svg>
      <AppIcon className="ml-[30px]">
        <path d="M.8 12C2 4 7 .5 13 .5c7 .5 11 6 10.500 11-.5 4-4 5.500-7 5-2-.4-2-1.500-1-2.500 1.500-3-1-6-5-6C6 8 2 10 1 14z" fill="#49c8c9" />
        <path d="M13 .5c7 .5 11 6 10.500 11-.5 4-4 5.500-7 5-2-.4-2-1.500-1-2.500 3-6-3-10-8-9C9 1.500 11 .5 13 .5z" fill="#5bd477" />
        <path d="M.8 12.500C1 8.500 5 6 10 7c-4 2-4 9 0 12 4 2.500 8 2 11.500 0C19 23 15 24 11 23.500 5 23 .8 18 .8 12.500z" fill="#1b6ac0" />
        <path d="M8 11c-2 5 3 10 9 9.500l4.500-1.500c-4 2-12 1-12-6z" fill="#124a8c" />
      </AppIcon>
      <AppIcon className="ml-[25px]">
        <path d="M1 3h9l2 2h10v17H1z" fill="#e8a33a" /><path d="M1 7h22v15H1z" fill="#fcd462" /><path d="M5 14h14v9h-3.500v-4h-7v4H5z" fill="#3b8ad8" />
      </AppIcon>
      <AppIcon className="ml-[25px]">
        <path d="M8 6V2.500h8V6" stroke="#2bb3ef" strokeWidth="2" fill="none" /><rect x=".5" y="5" width="23" height="19" rx="3" fill="#f5f5f5" />
        <path d="M7 9h4.500v4.500H7z" fill="#f25022" /><path d="M12.500 9H17v4.500h-4.500z" fill="#7fba00" /><path d="M7 14.500h4.500V19H7z" fill="#00a4ef" /><path d="M12.500 14.500H17V19h-4.500z" fill="#ffb900" />
      </AppIcon>
      <AppIcon className="ml-[25px]">
        <path d="M0 8l12-7 12 7v15H0z" fill="#1068b8" /><path d="M1 8h22L12 16z" fill="#fff" /><path d="M0 8l12 9 12-9v15H0z" fill="#35a8e8" /><path d="M0 23l12-9 12 9z" fill="#1c8ade" /><path d="M12 17l12-9v15z" fill="#4cc0f4" />
      </AppIcon>
      <AppIcon className="ml-[25px]">
        <circle cx="12" cy="12" r="12" fill="#fbc116" /><path d="M1.600 6A12 12 0 0122.400 6H12a6 6 0 00-5.500 4z" fill="#e33b2e" /><path d="M1.600 6A12 12 0 0010 23.800l6-9.500a6 6 0 01-9.200-1.300z" fill="#2da94f" /><circle cx="12" cy="12" r="5.600" fill="#fff" /><circle cx="12" cy="12" r="4.400" fill="#4285f4" />
      </AppIcon>
      <AppIcon className="ml-[25px]">
        <path d="M12 3h11v18H12z" fill="#fff" /><path d="M14 6.500h8M14 9.500h8M14 12.500h8M14 15.500h8M14 18.500h8" stroke="#2b579a" strokeWidth="1.200" /><path d="M1 3l13-2.500v23L1 21z" fill="#2b579a" /><text x="2.500" y="16" fontSize="10" fontWeight="700" fill="#fff" fontFamily="Liberation Sans, sans-serif">W</text>
      </AppIcon>
      <AppIcon className="ml-[25px]"><circle cx="12" cy="12" r="10.500" fill="#2fa6de" /><path d="M5 12l13-5.500-2 12-4.500-3-2 2-1-4z" fill="#fff" /><path d="M9 14l7-6" stroke="#a8cbe0" /></AppIcon>
      <div className="relative ml-[25px] shrink-0">
        <AppIcon>
          <path d="M0 24l1.800-6.500A11.500 11.500 0 1112 23.500a11.500 11.500 0 01-5.500-1.300z" fill="#fff" />
          <path d="M2.300 21.700l1.300-4.600A9.800 9.800 0 117 20.400z" fill="#25c160" /><path d="M8 6.500c-2 1-1.500 4 1.500 7.500s6.500 4.500 8 2.500c.6-1 .3-1.500-.3-1.800l-2.200-1c-.8-.2-1 1-1.700 1.100-1.200 0-4-2.800-4-4 .2-.6 1.200-.8.9-1.700L9.300 7c-.3-.7-.8-.7-1.300-.5z" fill="#fff" />
        </AppIcon>
        <div className="absolute left-[16px] top-[10px] flex size-4 items-center justify-center rounded-full border border-[#aaa] bg-[#333b40] text-[11px] leading-none">4</div>
      </div>
      <div className="ml-[13px] flex h-10 w-12 shrink-0 items-center justify-center border-b-2 border-[#76b9ed] bg-[#53646c]">
        <div className="flex size-[22px] items-center justify-center bg-[#f4f7f8]"><svg width="21" height="21" viewBox="0 0 20 20"><TableauMark mono /></svg></div>
      </div>
      <div className="ml-[5px] flex h-10 w-10 shrink-0 items-center justify-center border-b-2 border-[#76b9ed]">
        <AppIcon><path d="M12 3h11v18H12z" fill="#fff" stroke="#d24726" /><path d="M14.500 13h6M14.500 16h6M14.500 8a3 3 0 106 0h-3V5z" stroke="#d24726" fill="#d24726" /><path d="M1 3l13-2.500v23L1 21z" fill="#d24726" /><text x="3.500" y="17" fontSize="12" fontWeight="700" fill="#fff" fontFamily="Liberation Sans, sans-serif">P</text></AppIcon>
      </div>
      <div className="ml-[9px] flex h-10 w-8 shrink-0 items-center justify-center border-b-2 border-[#76b9ed] pl-2">
        <AppIcon><rect x="1.500" y="1.500" width="21" height="21" rx="3" fill="#b30b00" /><path d="M6 17c2-1 6-7 5.500-10-.5-1.500 1.500-1.500 1 .5-1 4 3.500 6.500 5.500 6s1.500-1.500 0-1.500c-3 0-8 1.500-11 3.500-1.500 1-1.500 2.500-1 1.500z" fill="none" stroke="#fff" strokeWidth="1.300" /></AppIcon>
      </div>
      <div className="h-10 w-2 shrink-0 border-b-2 border-[#4a7fa8]" />
      <svg width="26" height="26" viewBox="0 0 26 26" className="ml-[36px] shrink-0">
        <circle cx="11" cy="14" r="9" fill="#f49b2c" /><path d="M3 9c-3 0-3-4 0-4 1-4 7-4 8-1 3 0 3 5 0 5z" fill="#b8d4f5" /><path d="M13 23c-3 0-3-4 0-4 1-3 6-3 7 0 4 0 4 4 1 4z" fill="#c8dcf6" /><circle cx="18.500" cy="6.500" r="6" fill="#c8322c" /><text x="16.200" y="10" fontSize="9" fill="#fff" fontFamily="Liberation Sans, sans-serif">1</text>
      </svg>
      <span className="ml-[7px] w-[30px] shrink-0 whitespace-nowrap text-[13.5px] tracking-[-0.4px]">31°C</span>
      <svg width="12" height="8" viewBox="0 0 12 8" fill="none" stroke="#fff" strokeWidth="1.300" className="ml-[25px] shrink-0"><path d="M.8 7L6 1.500 11.200 7" /></svg>
      <svg width="146" height="20" viewBox="0 0 146 20" fill="none" stroke="#fff" strokeWidth="1.200" className="ml-[10px] shrink-0">
        <rect x="4.500" y="6" width="7" height="8" rx="1.500" /><path d="M11.500 8.500l2-1v5l-2-1M5 3.500c2-1.500 4.500-1.500 6.500 0M5 16.500c2 1.500 4.500 1.500 6.500 0" />
        <path d="M27 14c-4 0-4-5 0-5 0-5 7-6 8-2 4 0 5 4 2 6z" fill="#c4c9d0" stroke="none" /><circle cx="35.500" cy="13.500" r="4.500" fill="#2a7bd0" stroke="none" /><path d="M36 10.500l-2.500 3.500h4l-2.500 3" strokeWidth="1" />
        <path d="M55 16.500h-6v-11l10-2v7M52 9l3-1.500 2.500 2M57.500 12.500l-3 1.500-2-2" /><circle cx="60" cy="15" r="3.800" fill="#f59b1d" stroke="none" />
        <path d="M77.500 6.500h9v8h-10v-3M74 3v3M77 3v3M72.500 6h6v2.500c0 2-6 2-6 0zM75.500 10v4M87.500 9v3" /><path d="M80 8.500h5v4h-5z" fill="#fff" stroke="none" />
        <path d="M99 16C100 8 104 5 110 4M102 16c.5-5 3-8 8-9M105 16c.5-3 2-5 5-6M108 16c.3-1 1-2.500 2-3" />
        <path d="M120 7.500v5h2.500l3.500 3.500V4l-3.500 3.500zM128.500 7.500c1 1.500 1 3.500 0 5M131 5.500c2 2.700 2 6.300 0 9M133.500 3.500c3 4 3 9 0 13" />
      </svg>
      <span className="w-[24px] shrink-0 text-[12px] tracking-[-0.4px]">ENG</span>
      <div className="ml-[9px] w-[62px] shrink-0 text-center text-[12px] leading-[18px] tracking-[-0.55px]">
        <div className="whitespace-nowrap">12:27 PM</div>
        <div className="whitespace-nowrap">10-10-2023</div>
      </div>
      <div className="relative ml-[17px] shrink-0">
        <svg width="16" height="18" viewBox="0 0 16 18" className="block"><path d="M0 1h16v12H8l-4 4v-4H0z" fill="#fff" /><path d="M2.500 4.500h11M2.500 7.500h11M2.500 10.500h7" stroke="#1b2a43" /></svg>
        <div className="absolute left-[7px] top-[8px] flex size-4 items-center justify-center rounded-full border border-[#999] bg-[#2c333c] text-[11px] leading-none">6</div>
      </div>
      <div className="ml-[20px] h-10 w-px bg-[#5b6880]" />
    </footer>
  );
}

export default function App() {
  return (
    <div className="flex h-[768px] w-[1366px] flex-col overflow-hidden bg-white font-['Open_Sans','Noto_Sans',sans-serif]">
      <TitleBar />
      <MenuBar />
      <Toolbar />
      <div className="flex min-h-0 flex-1">
        <SidePane />
        <Canvas />
        <div className="flex-1 bg-[#f4f4f4]" />
        <div className="flex w-[16px] flex-col bg-[#f0f0f0]">
          <Arrow />
          <div className="ml-px h-[322px] bg-[#cdcdcd]" />
          <div className="mt-auto"><Arrow down /></div>
        </div>
      </div>
      <TabStrip />
      <StatusBar />
      <Taskbar />
    </div>
  );
}
